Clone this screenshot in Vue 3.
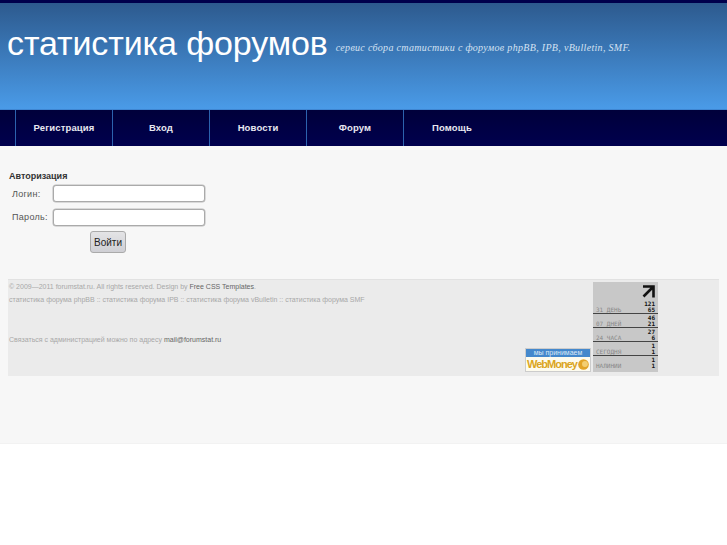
<template>
  <div class="page">
    <header class="header">
      <h1 class="logo">статистика форумов</h1>
      <p class="slogan">сервис сбора статистики с форумов phpBB, IPB, vBulletin, SMF.</p>
    </header>

    <nav class="menu">
      <a v-for="item in menu" :key="item" class="menu-item">{{ item }}</a>
    </nav>

    <main class="content">
      <h3 class="auth-title">Авторизация</h3>
      <form class="auth" @submit.prevent>
        <div class="row">
          <label>Логин:</label>
          <input class="field" type="text" />
        </div>
        <div class="row">
          <label>Пароль:</label>
          <input class="field" type="password" />
        </div>
        <button class="submit" type="submit">Войти</button>
      </form>

      <footer class="footer">
        <div class="footer-text">
          <p>© 2009—2011 forumstat.ru. All rights reserved. Design by <a>Free CSS Templates</a>.</p>
          <p>статистика форума phpBB :: статистика форума IPB :: статистика форума vBulletin :: статистика форума SMF</p>
          <p class="contact">Связаться с администрацией можно по адресу <a>mail@forumstat.ru</a></p>
        </div>
        <div class="webmoney">
          <div class="wm-top">мы принимаем</div>
          <div class="wm-bottom">
            <span>WebMoney</span>
            <svg width="11" height="11" viewBox="0 0 12 12"><circle cx="6" cy="6" r="5.8" fill="#e2a426" /><circle cx="7.6" cy="5.4" r="3.2" fill="#f3cf72" /></svg>
          </div>
        </div>
        <div class="stats">
          <svg class="arrow" width="13" height="13" viewBox="0 0 13 13">
            <path d="M1 1.5h10.5v11M11.5 1.5L1.5 11.5" fill="none" stroke="#111" stroke-width="2.6" />
          </svg>
          <div v-for="s in stats" :key="s.label" class="stat">
            <span class="stat-label">{{ s.label }}</span>
            <span class="stat-nums">{{ s.a }}<br />{{ s.b }}</span>
          </div>
        </div>
      </footer>
    </main>
  </div>
</template>

<script setup>
const menu = ["Регистрация", "Вход", "Новости", "Форум", "Помощь"];

const stats = [
  { label: "31 ДЕНЬ", a: 121, b: 65 },
  { label: "07 ДНЕЙ", a: 46, b: 21 },
  { label: "24 ЧАСА", a: 27, b: 6 },
  { label: "СЕГОДНЯ", a: 1, b: 1 },
  { label: "НАЛИНИИ", a: 1, b: 1 },
];
</script>

<style>
body {
  background: #fff;
}
</style>

<style scoped>
.page {
  font-family: "Liberation Sans", Arial, sans-serif;
  color: #444;
}

.header {
  height: 86px;
  border-top: 3px solid #00004c;
  background: linear-gradient(#2d5a8e, #4a9be8);
  display: flex;
  align-items: flex-start;
  padding: 20px 0 0 7px;
}

.logo {
  margin: 0;
  font-size: 34px;
  line-height: 40px;
  letter-spacing: -0.12px;
  font-weight: normal;
  color: #fff;
}

.slogan {
  margin: 18px 0 0 8px;
  font-family: "Liberation Serif", serif;
  font-style: italic;
  font-size: 10px;
  line-height: 14px;
  letter-spacing: 0.32px;
  color: #d5e2f2;
}

.menu {
  height: 36px;
  border-top: 1px solid #3f86d2;
  background: linear-gradient(#00003a, #00004e);
  display: flex;
  padding-left: 15px;
}

.menu-item {
  width: 97px;
  box-sizing: border-box;
  border-left: 1px solid #2c62ae;
  text-align: center;
  font-size: 9.5px;
  font-weight: bold;
  line-height: 36px;
  letter-spacing: 0.13px;
  color: #e8e8f0;
}

.content {
  height: 298px;
  box-sizing: border-box;
  background: #f7f7f7;
  padding: 25px 8px 0;
  border-bottom: 1px solid #f2f2f2;
}

.auth-title {
  margin: 0 0 1px 1px;
  font-size: 9px;
  line-height: 10px;
  font-weight: bold;
  color: #333;
}

.auth {
  height: 84px;
}

.row {
  display: flex;
  align-items: center;
  height: 23.5px;
  font-size: 9px;
  letter-spacing: 0.3px;
  color: #555;
}

.row label {
  width: 45px;
  padding-left: 4px;
  box-sizing: border-box;
}

.field {
  width: 152px;
  height: 17px;
  box-sizing: border-box;
  border: 1px solid #aaa;
  box-shadow: 0 0 0 0.5px #bbb;
  border-radius: 3px;
  background: #fff;
  padding: 0;
}

.submit {
  display: block;
  width: 36px;
  height: 22px;
  margin: 2px 0 0 82px;
  padding: 0;
  font-family: "Liberation Sans", Arial, sans-serif;
  font-size: 10px;
  color: #222;
  background: linear-gradient(#e4e4e6, #cfcfd4);
  border: 1px solid #aaa;
  border-radius: 3px;
}

.footer {
  height: 97px;
  box-sizing: border-box;
  margin-top: 13px;
  background: #ebebeb;
  border-top: 1px solid #e2e2e2;
  display: flex;
  align-items: flex-start;
  font-size: 7px;
  color: #a8a8a8;
}

.footer-text {
  width: 517px;
  padding-left: 1px;
  box-sizing: border-box;
}

.footer-text p {
  margin: 0;
  line-height: 13px;
}

.footer-text a {
  color: #666;
}

.contact {
  padding-top: 27px;
}

.webmoney {
  width: 66px;
  height: 24px;
  margin-top: 68px;
  border: 1px solid #ccc;
  box-sizing: border-box;
  background: #fdfbee;
}

.wm-top {
  height: 8px;
  background: #4488cc;
  color: #dbe8f6;
  font-size: 7px;
  line-height: 8px;
  text-align: center;
}

.wm-bottom {
  display: flex;
  align-items: center;
  justify-content: center;
  gap: 1px;
  height: 14px;
  font-size: 11px;
  font-weight: bold;
  letter-spacing: -1px;
  color: #dba520;
}

.stats {
  position: relative;
  width: 65px;
  height: 90px;
  box-sizing: border-box;
  margin: 2px 0 0 2px;
  padding-bottom: 3px;
  background: #c8c8c8;
  display: flex;
  flex-direction: column;
  justify-content: flex-end;
}

.arrow {
  position: absolute;
  top: 3px;
  right: 3px;
}

.stat {
  height: 14px;
  box-sizing: border-box;
  display: flex;
  justify-content: space-between;
  align-items: flex-end;
  padding: 0 3px 1px;
  border-top: 1px solid #444;
  font-family: "DejaVu Sans Mono", monospace;
  font-size: 6px;
  line-height: 5.5px;
}

.stat:first-of-type {
  border-top: none;
}

.stat-label {
  color: #888;
}

.stat-nums {
  text-align: right;
  color: #111;
  font-weight: bold;
}
</style>
